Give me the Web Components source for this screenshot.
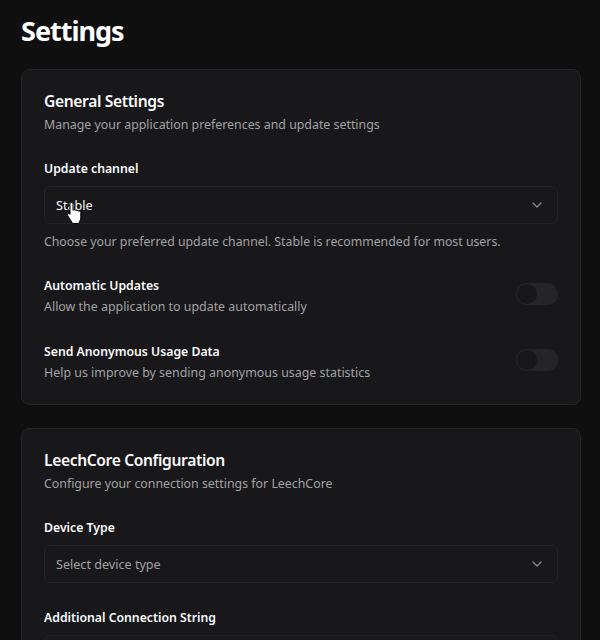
<!DOCTYPE html>
<html>
<head>
<meta charset="utf-8">
<style>
  html, body { margin: 0; height: 640px; overflow: hidden; background: #0f0f10; }
  body { font-family: "Noto Sans", "Open Sans", sans-serif; color: #fafafa; }
</style>
</head>
<body>
<settings-page>
  <settings-card heading="General Settings" sub="Manage your application preferences and update settings">
    <select-field label="Update channel" value="Stable" hint="Choose your preferred update channel. Stable is recommended for most users." cursor></select-field>
    <toggle-row label="Automatic Updates" sub="Allow the application to update automatically"></toggle-row>
    <toggle-row label="Send Anonymous Usage Data" sub="Help us improve by sending anonymous usage statistics"></toggle-row>
  </settings-card>
  <settings-card heading="LeechCore Configuration" sub="Configure your connection settings for LeechCore">
    <select-field label="Device Type" value="Select device type" placeholder></select-field>
    <select-field label="Additional Connection String" value=""></select-field>
  </settings-card>
</settings-page>
<script>
class SettingsPage extends HTMLElement {
  constructor() {
    super();
    this.attachShadow({ mode: 'open' }).innerHTML = `
      <style>
        :host { display: block; padding: 11px 19px 0 21px; }
        h1 { margin: 0 0 19px; font-size: 27px; line-height: 39px; font-weight: 700; letter-spacing: -1px; color: #fff; }
        .cards { display: flex; flex-direction: column; gap: 23px; }
      </style>
      <h1>Settings</h1>
      <div class="cards"><slot></slot></div>`;
  }
}

class SettingsCard extends HTMLElement {
  constructor() {
    super();
    this.attachShadow({ mode: 'open' }).innerHTML = `
      <style>
        :host { display: block; background: #18181a; border: 1px solid #242427; border-radius: 8px; padding: 21px 22px 21px; }
        h2 { margin: 0; font-size: 15.6px; line-height: 21px; font-weight: 600; letter-spacing: -0.36px; color: #fafafa; }
        p { margin: 4px 0 0; font-size: 12.37px; line-height: 18px; color: #a1a1a5; }
        .body { display: flex; flex-direction: column; gap: 26px; margin-top: 26px; }
      </style>
      <h2>${this.getAttribute('heading')}</h2>
      <p>${this.getAttribute('sub')}</p>
      <div class="body"><slot></slot></div>`;
  }
}

class SelectField extends HTMLElement {
  constructor() {
    super();
    const placeholder = this.hasAttribute('placeholder');
    const hint = this.getAttribute('hint');
    const cursor = this.hasAttribute('cursor') ? `
      <svg class="hand" width="17" height="23" viewBox="0 0 16 23">
        <path d="M5 1.5c.9 0 1.5.7 1.5 1.6v6.2c.3-.6 2.5-.7 2.8.3.5-.5 2.3-.4 2.6.6.6-.4 2.4-.2 2.4 1.3v4.7c0 2.6-1.6 5.3-2.3 6.3H6.2L1.4 15c-.7-1-.6-2 .1-2.4.8-.4 1.6 0 2 .7V3.1C3.5 2.2 4.1 1.5 5 1.5z" fill="#fff" stroke="#000" stroke-width="1"/>
      </svg>` : '';
    this.attachShadow({ mode: 'open' }).innerHTML = `
      <style>
        :host { display: block; }
        label { display: block; font-size: 12.25px; line-height: 18px; font-weight: 600; color: #fafafa; margin-bottom: 8px; }
        .box { position: relative; display: flex; align-items: center; justify-content: space-between; height: 36px; padding: 0 12px 0 11px; border: 1px solid #232326; border-radius: 6px; background: #18181a; font-size: 12.6px; color: ${placeholder ? '#a1a1a5' : '#fafafa'}; }
        svg.chev { flex: none; }
        .hand { position: absolute; left: 21px; top: 14px; }
        .hint { margin: 9px 0 0; font-size: 12.3px; line-height: 18px; color: #a1a1a5; }
      </style>
      <label>${this.getAttribute('label')}</label>
      <div class="box">
        <span>${this.getAttribute('value')}</span>
        <svg class="chev" width="16" height="16" viewBox="0 0 24 24" fill="none" stroke="#85858b" stroke-width="2" stroke-linecap="round" stroke-linejoin="round"><path d="m6 9 6 6 6-6"/></svg>
        ${cursor}
      </div>
      ${hint ? `<p class="hint">${hint}</p>` : ''}`;
  }
}

class ToggleRow extends HTMLElement {
  constructor() {
    super();
    this.attachShadow({ mode: 'open' }).innerHTML = `
      <style>
        :host { display: flex; align-items: flex-start; justify-content: space-between; height: 40px; }
        .t { font-size: 12.25px; line-height: 18px; font-weight: 600; color: #fafafa; }
        .s { margin-top: 3px; font-size: 12.42px; line-height: 18px; color: #a1a1a5; }
        .sw { width: 42px; height: 22px; margin-top: 6px; box-sizing: border-box; border-radius: 11px; background: #252528; padding: 1px; }
        .sw i { display: block; width: 20px; height: 20px; border-radius: 50%; background: #18181a; }
      </style>
      <div>
        <div class="t">${this.getAttribute('label')}</div>
        <div class="s">${this.getAttribute('sub')}</div>
      </div>
      <div class="sw"><i></i></div>`;
  }
}

customElements.define('settings-page', SettingsPage);
customElements.define('settings-card', SettingsCard);
customElements.define('select-field', SelectField);
customElements.define('toggle-row', ToggleRow);
</script>
</body>
</html>
